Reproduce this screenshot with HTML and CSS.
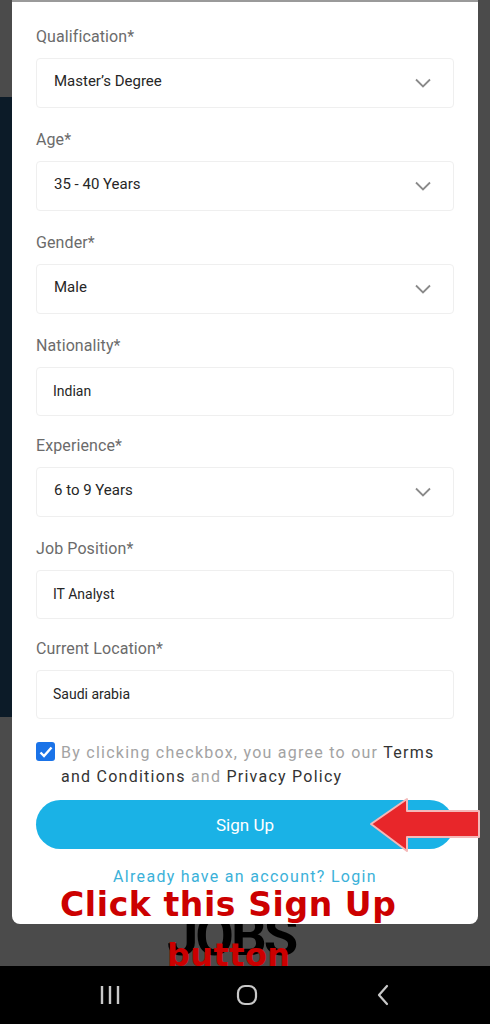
FILE: index.html
```html
<!DOCTYPE html>
<html>
<head>
<meta charset="utf-8">
<link rel="stylesheet" href="styles.css">
</head>
<body>
<div class="screen">
  <div class="backdrop">
    <div class="navy"></div>
    <div class="brand">JOBS</div>
  </div>
  <nav class="navbar">
    <svg class="nav-icon" width="24" height="24" viewBox="0 0 24 24"><path d="M4 3v18M12 3v18M20 3v18" stroke="#c8c8c8" stroke-width="2.4" fill="none"/></svg>
    <svg class="nav-icon" width="24" height="24" viewBox="0 0 24 24"><rect x="3" y="3" width="18" height="18" rx="7" stroke="#c8c8c8" stroke-width="2.2" fill="none"/></svg>
    <svg class="nav-icon" width="24" height="24" viewBox="0 0 24 24"><path d="M15 3l-8 9 8 9" stroke="#c8c8c8" stroke-width="2.2" fill="none" stroke-linecap="round" stroke-linejoin="round"/></svg>
  </nav>

  <div class="modal">
    <div class="group sel">
      <div class="label">Qualification*</div>
      <div class="field">Master’s Degree<svg class="chev" width="18" height="10" viewBox="0 0 18 10"><path d="M2 1.5l7 7 7-7" stroke="#8a8a8a" stroke-width="1.8" fill="none"/></svg></div>
    </div>
    <div class="group sel">
      <div class="label">Age*</div>
      <div class="field">35 - 40 Years<svg class="chev" width="18" height="10" viewBox="0 0 18 10"><path d="M2 1.5l7 7 7-7" stroke="#8a8a8a" stroke-width="1.8" fill="none"/></svg></div>
    </div>
    <div class="group sel">
      <div class="label">Gender*</div>
      <div class="field">Male<svg class="chev" width="18" height="10" viewBox="0 0 18 10"><path d="M2 1.5l7 7 7-7" stroke="#8a8a8a" stroke-width="1.8" fill="none"/></svg></div>
    </div>
    <div class="group inp">
      <div class="label">Nationality*</div>
      <div class="field">Indian</div>
    </div>
    <div class="group sel">
      <div class="label">Experience*</div>
      <div class="field">6 to 9 Years<svg class="chev" width="18" height="10" viewBox="0 0 18 10"><path d="M2 1.5l7 7 7-7" stroke="#8a8a8a" stroke-width="1.8" fill="none"/></svg></div>
    </div>
    <div class="group inp">
      <div class="label">Job Position*</div>
      <div class="field">IT Analyst</div>
    </div>
    <div class="group inp">
      <div class="label">Current Location*</div>
      <div class="field">Saudi arabia</div>
    </div>
    <div class="agree">
      <span class="check"><svg width="14" height="12" viewBox="0 0 14 12"><path d="M1.5 6.5l3.5 3.5 7.5-8.5" stroke="#fff" stroke-width="2.4" fill="none"/></svg></span>
      <p class="agree-text">By clicking checkbox, you agree to our <b>Terms and Conditions</b> and <b>Privacy Policy</b></p>
    </div>
    <div class="btn">Sign Up</div>
    <div class="login">Already have an account? Login</div>
  </div>

  <div class="note note-main">Click this Sign Up</div>
  <div class="note note-sub">button</div>
  <svg class="arrow" width="112" height="58" viewBox="0 0 112 58"><path d="M2 27 L38 2 L38 14 L110 14 L110 40 L38 40 L38 54 Z" fill="#e8262a" stroke="#f4b8b8" stroke-width="2" stroke-linejoin="round"/></svg>
</div>
</body>
</html>
```

FILE: styles.css
```css
* { box-sizing: border-box; }
html, body { margin: 0; padding: 0; }
body { width: 490px; height: 1024px; overflow: hidden; font-family: Roboto, "Noto Sans", sans-serif; background: #4b4b4b; }
.screen { position: relative; width: 490px; height: 1024px; }
.backdrop { height: 966px; background: #4b4b4b; padding-top: 97px; display: flex; flex-direction: column; overflow: hidden; }
.navy { height: 621px; width: 470px; background: #0c1b28; }
.brand { margin-top: 189px; margin-left: 167px; font-family: Roboto, sans-serif; font-weight: 700; font-size: 56px; line-height: 60px; color: #000; letter-spacing: -3px; }
.navbar { height: 58px; background: #000; display: flex; align-items: center; justify-content: space-between; padding: 0 94px 0 98px; }
.modal { position: absolute; top: 0; left: 12px; width: 466px; height: 924px; background: #fff; border-top: 2px solid #9a9a9a; border-radius: 0 0 8px 8px; padding: 25px 24px 0; display: flex; flex-direction: column; }
.group { display: flex; flex-direction: column; gap: 11px; margin-bottom: 22px; }
.label { font-size: 16px; line-height: 20px; color: #6b6b6b; letter-spacing: 0.1px; }
.field { border: 1px solid #efefef; border-radius: 4px; display: flex; align-items: center; justify-content: space-between; padding: 0 21px 0 17px; color: #262626; }
.sel .field { height: 50px; font-size: 15px; padding-bottom: 5px; }
.inp .field { height: 49px; font-size: 14px; padding-left: 16px; padding-bottom: 1px; }
.group.inp { margin-bottom: 20px; }
.chev { margin-top: 4px; }
.agree { display: flex; gap: 6px; margin-top: 1px; }
.check { flex: none; width: 19px; height: 19px; background: #1a73e8; border-radius: 3px; display: flex; align-items: center; justify-content: center; margin-top: 2px; }
.agree-text { margin: 0; font-size: 16px; line-height: 24px; color: #a3a3a3; letter-spacing: 1.25px; margin-top: 1px; }
.agree-text b { font-weight: 400; color: #333; }
.btn { margin-top: 11px; height: 49px; border-radius: 25px; background: #1ab2e6; color: #fff; font-size: 17px; display: flex; align-items: center; justify-content: center; }
.login { margin-top: 18px; text-align: center; font-size: 16px; color: #3bb1d9; letter-spacing: 1.3px; line-height: 20px; }
.note { position: absolute; font-family: "DejaVu Sans", sans-serif; font-weight: 900; color: #cc0000; white-space: nowrap; }
.note-main { left: 60px; top: 884px; font-size: 33px; line-height: 42px; letter-spacing: 0.6px; }
.note-sub { left: 167px; top: 936px; font-size: 32px; line-height: 38px; letter-spacing: 0.4px; }
.arrow { position: absolute; left: 369px; top: 797px; }
```
